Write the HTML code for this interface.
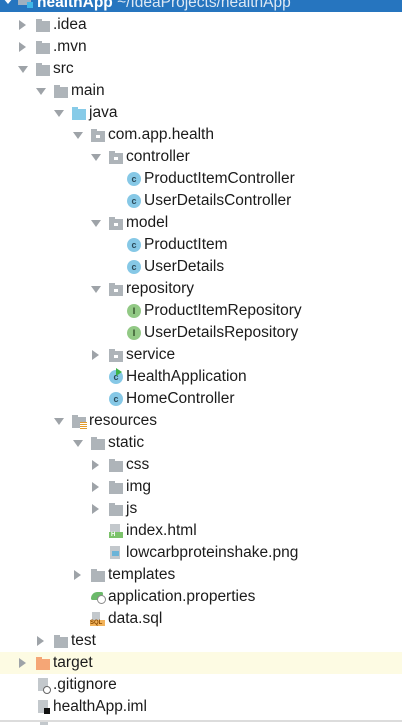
<!DOCTYPE html>
<html><head><meta charset="utf-8"><style>
html,body{margin:0;padding:0;background:#fff;width:402px;height:725px;overflow:hidden;position:relative;font-family:"Liberation Sans","DejaVu Sans",sans-serif;}
.r{position:absolute;left:0;width:402px;height:22px;}
.t{position:absolute;top:0;line-height:22px;font-size:15.5px;color:#1b1b1b;white-space:nowrap;left:calc(var(--x) + 35px);}
.ar{position:absolute;left:calc(var(--x) + 1px);top:6px;width:0;height:0;border-top:5px solid transparent;border-bottom:5px solid transparent;border-left:7px solid #9ea3a8;}
.ad{position:absolute;left:calc(var(--x));top:8px;width:0;height:0;border-left:5px solid transparent;border-right:5px solid transparent;border-top:7px solid #9ea3a8;}
.f{position:absolute;left:calc(var(--x) + 18px);top:7px;width:14px;height:11px;background:#aeb4b9;}
.f:before{content:"";position:absolute;left:0;top:-2px;width:6px;height:2px;background:inherit;}
.f.b{background:#87cbe8}.f.o{background:#f5a676}
.f.p:after{content:"";position:absolute;left:5px;top:4px;width:4px;height:3px;background:#fff;}
.c{position:absolute;left:calc(var(--x) + 18px);top:4px;width:14px;height:14px;border-radius:50%;background:#86c8e6;color:#2a4a5a;font-size:9px;line-height:14px;text-align:center;font-weight:bold;}
.c.g{background:#92c985;color:#2d4a25}
.d{position:absolute;left:calc(var(--x) + 19px);top:4px;width:10px;height:13px;background:#c3c8cc;}
</style></head><body>
<div style="position:absolute;left:0;top:0;width:402px;height:12px;background:#2675bf;"></div>
<div class="r" style="top:-8px;--x:0px">
<div style="position:absolute;left:3px;top:6px;border-left:5px solid transparent;border-right:5px solid transparent;border-top:6px solid #fff;width:0;height:0"></div>
<div style="position:absolute;left:18px;top:4px;width:13px;height:9px;background:#9fb0c0"></div><div style="position:absolute;left:27px;top:10px;width:6px;height:6px;background:#3fb6e8"></div>
<div style="position:absolute;left:37px;top:0;line-height:22px;font-size:15.5px;white-space:nowrap;color:#fff;font-weight:bold">healthApp <span style="font-weight:normal;color:#dde8f4">~/IdeaProjects/healthApp</span></div></div>

<div class="r" style="top:14px;--x:18px"><div class="ar"></div><div class="f"></div><div class="t">.idea</div></div>
<div class="r" style="top:36px;--x:18px"><div class="ar"></div><div class="f"></div><div class="t">.mvn</div></div>
<div class="r" style="top:58px;--x:18px"><div class="ad"></div><div class="f"></div><div class="t">src</div></div>
<div class="r" style="top:80px;--x:36px"><div class="ad"></div><div class="f"></div><div class="t">main</div></div>
<div class="r" style="top:102px;--x:54px"><div class="ad"></div><div class="f b"></div><div class="t">java</div></div>
<div class="r" style="top:124px;--x:73px"><div class="ad"></div><div class="f p"></div><div class="t">com.app.health</div></div>
<div class="r" style="top:146px;--x:91px"><div class="ad"></div><div class="f p"></div><div class="t">controller</div></div>
<div class="r" style="top:168px;--x:109px"><div class="c">c</div><div class="t">ProductItemController</div></div>
<div class="r" style="top:190px;--x:109px"><div class="c">c</div><div class="t">UserDetailsController</div></div>
<div class="r" style="top:212px;--x:91px"><div class="ad"></div><div class="f p"></div><div class="t">model</div></div>
<div class="r" style="top:234px;--x:109px"><div class="c">c</div><div class="t">ProductItem</div></div>
<div class="r" style="top:256px;--x:109px"><div class="c">c</div><div class="t">UserDetails</div></div>
<div class="r" style="top:278px;--x:91px"><div class="ad"></div><div class="f p"></div><div class="t">repository</div></div>
<div class="r" style="top:300px;--x:109px"><div class="c g">I</div><div class="t">ProductItemRepository</div></div>
<div class="r" style="top:322px;--x:109px"><div class="c g">I</div><div class="t">UserDetailsRepository</div></div>
<div class="r" style="top:344px;--x:91px"><div class="ar"></div><div class="f p"></div><div class="t">service</div></div>
<div class="r" style="top:366px;--x:91px"><div class="c">c</div><div style="position:absolute;left:116px;top:2px;border-top:4px solid transparent;border-bottom:4px solid transparent;border-left:6px solid #3cb34a;width:0;height:0"></div><div class="t">HealthApplication</div></div>
<div class="r" style="top:388px;--x:91px"><div class="c">c</div><div class="t">HomeController</div></div>
<div class="r" style="top:410px;--x:54px"><div class="ad"></div><div class="f"></div><div style="position:absolute;left:80px;top:12px;width:7px;height:7px;background:repeating-linear-gradient(#e39b2a 0 1px,#fff 1px 2px)"></div><div class="t">resources</div></div>
<div class="r" style="top:432px;--x:73px"><div class="ad"></div><div class="f"></div><div class="t">static</div></div>
<div class="r" style="top:454px;--x:91px"><div class="ar"></div><div class="f"></div><div class="t">css</div></div>
<div class="r" style="top:476px;--x:91px"><div class="ar"></div><div class="f"></div><div class="t">img</div></div>
<div class="r" style="top:498px;--x:91px"><div class="ar"></div><div class="f"></div><div class="t">js</div></div>
<div class="r" style="top:520px;--x:91px"><div class="d"></div><div style="position:absolute;left:109px;top:12px;width:14px;height:6px;background:#7bc26a;color:#fff;font-size:6px;line-height:6px;font-weight:bold;padding-left:2px;box-sizing:border-box">H</div><div class="t">index.html</div></div>
<div class="r" style="top:542px;--x:91px"><div class="d"></div><div style="position:absolute;left:112px;top:9px;width:7px;height:5px;background:#6bb4d8"></div><div class="t">lowcarbproteinshake.png</div></div>
<div class="r" style="top:564px;--x:73px"><div class="ar"></div><div class="f"></div><div class="t">templates</div></div>
<div class="r" style="top:586px;--x:73px"><div style="position:absolute;left:91px;top:6px;width:12px;height:8px;border-radius:8px 2px 8px 2px;background:#6bb96a"></div><div style="position:absolute;left:97px;top:9px;width:7px;height:7px;border-radius:50%;border:1px solid #888;background:#fff"></div><div class="t">application.properties</div></div>
<div class="r" style="top:608px;--x:73px"><div class="d" style="width:8px;height:8px"></div><div style="position:absolute;left:90px;top:12px;width:15px;height:6px;background:#f2b35a;color:#8a4a00;font-size:6px;line-height:6px;font-weight:bold">SQL</div><div class="t">data.sql</div></div>
<div class="r" style="top:630px;--x:36px"><div class="ar"></div><div class="f"></div><div class="t">test</div></div>
<div class="r" style="top:652px;--x:18px;background:#fdfbe3"><div class="ar"></div><div class="f o"></div><div class="t">target</div></div>
<div class="r" style="top:674px;--x:18px"><div class="d" style="left:38px"></div><div style="position:absolute;left:43px;top:12px;width:6px;height:6px;border-radius:50%;border:1px solid #666;background:#fff"></div><div class="t">.gitignore</div></div>
<div class="r" style="top:696px;--x:18px"><div class="d" style="left:38px"></div><div style="position:absolute;left:44px;top:12px;width:6px;height:6px;background:#111"></div><div class="t">healthApp.iml</div></div>
<div style="position:absolute;left:0;top:720px;width:402px;height:2px;background:#dcdcdc"></div>
<div style="position:absolute;left:40px;top:722px;width:8px;height:3px;background:#c3c8cc"></div>
</body></html>
